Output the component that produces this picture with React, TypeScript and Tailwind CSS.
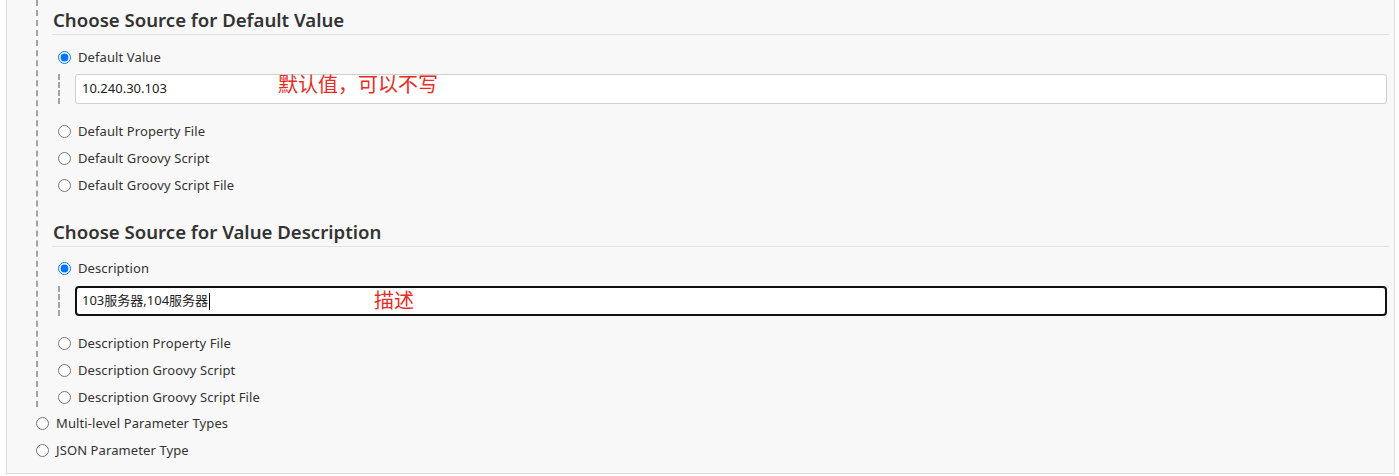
import React from 'react';

type Opt = { label: string; checked?: boolean };

const Radio: React.FC<Opt> = ({ label, checked }) => (
  <label className="flex h-[27px] items-center gap-[7px] text-[13px] text-[#333]">
    <input
      type="radio"
      readOnly
      checked={!!checked}
      className="m-0 h-[13px] w-[13px] accent-[#0075ff]"
    />
    <span className="tracking-[0.1px]">{label}</span>
  </label>
);

const Heading: React.FC<{ title: string; className?: string }> = ({ title, className }) => (
  <div
    className={
      'box-border h-[35px] border-b border-[#e2e2e2] pl-[1px] pt-[8px] text-[18.6px] font-semibold leading-[24px] text-[#333] ' +
      (className ?? '')
    }
  >
    {title}
  </div>
);

const App: React.FC = () => {
  return (
    <div className="h-[476px] overflow-hidden bg-white font-['Noto_Sans','Noto_Sans_CJK_SC',sans-serif]">
      <div className="ml-[6px] box-border h-[474px] w-[1389px] border-x border-b border-[#dcdcdc] bg-[#f8f8f8]">
        <div className="ml-[29px] h-[407px] border-l-2 border-dashed border-[#a3a3a3] pl-[14px] pr-[5px]">
          <Heading title="Choose Source for Default Value" />
          <div className="pl-[6px]">
            <div className="mt-[9px]">
              <Radio label="Default Value" checked />
            </div>
            <div className="mt-[3px] h-[30px] border-l-2 border-dashed border-[#a3a3a3] pl-[15px] pr-[2px]">
              <div className="relative box-border flex h-[30px] items-center rounded-[3px] border border-[#cfcfcf] bg-white px-[6px] text-[13px] text-[#222]">
                10.240.30.103
                <span className="absolute left-[202px] top-[-2px] text-[20px] leading-[24px] text-[#ea2a20]">
                  默认值，可以不写
                </span>
              </div>
            </div>
            <div className="mt-[14px]">
              <Radio label="Default Property File" />
              <Radio label="Default Groovy Script" />
              <Radio label="Default Groovy Script File" />
            </div>
          </div>

          <Heading title="Choose Source for Value Description" className="mt-[13px]" />
          <div className="pl-[6px]">
            <div className="mt-[8px]">
              <Radio label="Description" checked />
            </div>
            <div className="mt-[4px] h-[30px] border-l-2 border-dashed border-[#a3a3a3] pl-[15px] pr-[2px]">
              <div className="relative box-border flex h-[30px] items-center rounded-[4px] border-2 border-[#111] bg-white px-[5px] text-[13px] text-[#222]">
                103服务器,104服务器
                <span className="ml-[1px] h-[17px] w-[1px] bg-black" />
                <span className="absolute left-[297px] top-[1px] text-[20px] leading-[24px] text-[#ea2a20]">
                  描述
                </span>
              </div>
            </div>
            <div className="mt-[14px]">
              <Radio label="Description Property File" />
              <Radio label="Description Groovy Script" />
              <Radio label="Description Groovy Script File" />
            </div>
          </div>
        </div>
        <div className="mt-[3px] pl-[29px]">
          <Radio label="Multi-level Parameter Types" />
          <Radio label="JSON Parameter Type" />
        </div>
      </div>
    </div>
  );
};

export default App;
